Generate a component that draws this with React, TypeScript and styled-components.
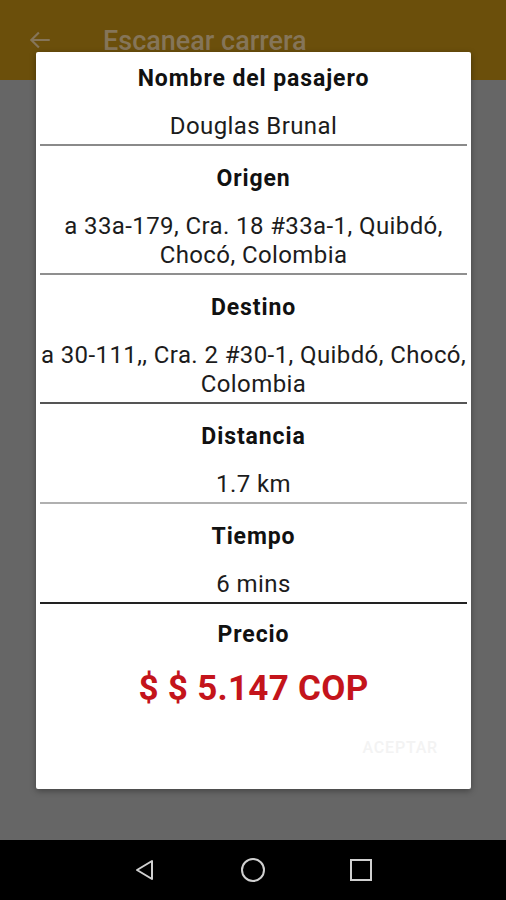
import styled, { createGlobalStyle } from 'styled-components';

const Global = createGlobalStyle`
  html, body { margin: 0; padding: 0; }
  body { font-family: Roboto, "Noto Sans", sans-serif; }
`;

const Screen = styled.div`
  position: relative;
  width: 506px;
  height: 900px;
  display: flex;
  flex-direction: column;
  overflow: hidden;
`;

const TopBar = styled.div`
  height: 80px;
  background: #6b4f0b;
  display: flex;
  align-items: center;
  padding: 0 0 0 27px;
  gap: 50px;
  box-sizing: border-box;
`;

const Title = styled.div`
  font-size: 27px;
  font-weight: 500;
  color: #857559;
  margin-top: 1px;
`;

const Body = styled.div`
  flex: 1;
  background: #666666;
`;

const NavBar = styled.div`
  height: 60px;
  background: #000;
  display: grid;
  grid-template-columns: repeat(3, 108px);
  justify-content: center;
  align-items: center;
  justify-items: center;
`;

const Dialog = styled.div`
  position: absolute;
  left: 36px;
  top: 52px;
  width: 435px;
  height: 737px;
  background: #fff;
  border-radius: 2px;
  box-shadow: 0 2px 6px rgba(0, 0, 0, 0.35);
  display: flex;
  flex-direction: column;
`;

const Section = styled.div<{ $top?: number }>`
  padding: ${(p) => p.$top ?? 19}px 0 3px;
  text-align: center;
`;

const Heading = styled.div`
  font-size: 23px;
  font-weight: 700;
  line-height: 28px;
  letter-spacing: 0.9px;
  color: #111;
`;

const Value = styled.div`
  margin-top: 19px;
  font-size: 24px;
  line-height: 29px;
  letter-spacing: 0.4px;
  color: #1c1c1c;
`;

const Price = styled.div`
  margin-top: 20px;
  font-size: 35px;
  font-weight: 700;
  line-height: 40px;
  letter-spacing: 0.3px;
  color: #c4141b;
`;

const Divider = styled.div<{ $tone: string }>`
  height: 2px;
  margin: 0 4px;
  background: ${(p) => p.$tone};
`;

const Actions = styled.div`
  display: flex;
  justify-content: flex-end;
  padding: 26px 33px 0 0;
`;

const GhostButton = styled.div`
  font-size: 16px;
  font-weight: 500;
  letter-spacing: 0.8px;
  color: #f3f3f3;
`;

const BackArrow = () => (
  <svg width="26" height="26" viewBox="0 0 24 24" fill="none" stroke="#857559" strokeWidth="2">
    <path d="M21 12H4M11 5l-7 7 7 7" />
  </svg>
);

const sections = [
  { title: 'Nombre del pasajero', value: 'Douglas Brunal', top: 13, tone: '#8a8a8a' },
  { title: 'Origen', value: 'a 33a-179, Cra. 18 #33a-1, Quibdó, Chocó, Colombia', tone: '#8f8f8f' },
  { title: 'Destino', value: 'a 30-111,, Cra. 2 #30-1, Quibdó, Chocó, Colombia', tone: '#555' },
  { title: 'Distancia', value: '1.7 km', tone: '#b0b0b0' },
  { title: 'Tiempo', value: '6 mins', tone: '#222' },
];

export default function App() {
  return (
    <Screen>
      <Global />
      <TopBar>
        <BackArrow />
        <Title>Escanear carrera</Title>
      </TopBar>
      <Body />
      <NavBar>
        <svg width="24" height="24" viewBox="0 0 24 24" fill="none" stroke="#d0d0d0" strokeWidth="2" strokeLinejoin="round">
          <path d="M19 3v18L4 12z" />
        </svg>
        <svg width="26" height="26" viewBox="0 0 26 26" fill="none" stroke="#d0d0d0" strokeWidth="2">
          <circle cx="13" cy="13" r="11" />
        </svg>
        <svg width="22" height="22" viewBox="0 0 22 22" fill="none" stroke="#d0d0d0" strokeWidth="2">
          <rect x="1" y="1" width="20" height="20" />
        </svg>
      </NavBar>
      <Dialog>
        {sections.map((s) => (
          <div key={s.title}>
            <Section $top={s.top}>
              <Heading>{s.title}</Heading>
              <Value>{s.value}</Value>
            </Section>
            <Divider $tone={s.tone} />
          </div>
        ))}
        <Section $top={17}>
          <Heading>Precio</Heading>
          <Price>$ $ 5.147 COP</Price>
        </Section>
        <Actions>
          <GhostButton>ACEPTAR</GhostButton>
        </Actions>
      </Dialog>
    </Screen>
  );
}
